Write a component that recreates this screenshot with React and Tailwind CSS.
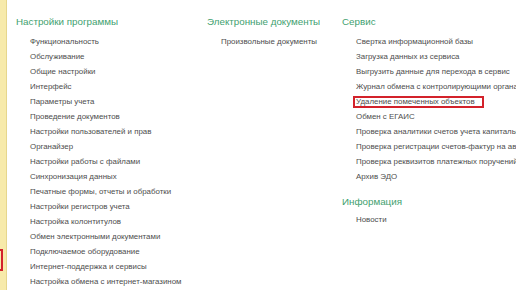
const settings = [
  'Функциональность',
  'Обслуживание',
  'Общие настройки',
  'Интерфейс',
  'Параметры учета',
  'Проведение документов',
  'Настройки пользователей и прав',
  'Органайзер',
  'Настройки работы с файлами',
  'Синхронизация данных',
  'Печатные формы, отчеты и обработки',
  'Настройки регистров учета',
  'Настройка колонтитулов',
  'Обмен электронными документами',
  'Подключаемое оборудование',
  'Интернет-поддержка и сервисы',
  'Настройка обмена с интернет-магазином',
]

const docs = ['Произвольные документы']

const service = [
  'Свертка информационной базы',
  'Загрузка данных из сервиса',
  'Выгрузить данные для перехода в сервис',
  'Журнал обмена с контролирующими органами',
  'Удаление помеченных объектов',
  'Обмен с ЕГАИС',
  'Проверка аналитики счетов учета капитальных вложений',
  'Проверка регистрации счетов-фактур на авансы',
  'Проверка реквизитов платежных поручений',
  'Архив ЭДО',
]

function Heading({ children }) {
  return <div className="h-[20px] text-[9.8px] leading-[20px] text-[#3f9f6f] whitespace-nowrap">{children}</div>
}

function Item({ children, marked }) {
  if (marked) {
    return (
      <div className="h-[15px] pl-[11px] flex items-center">
        <div className="w-[131px] h-[12px] border-2 border-[#d3222b] pl-[1px] text-[7.9px] leading-[8px] text-[#4d4d4d] whitespace-nowrap">
          {children}
        </div>
      </div>
    )
  }
  return (
    <div className="h-[15px] pl-[14px] text-[7.9px] leading-[15px] text-[#4d4d4d] whitespace-nowrap">
      {children}
    </div>
  )
}

function Section({ title, items, marked, gap = 'mt-[2px]' }) {
  return (
    <div>
      <Heading>{title}</Heading>
      <div className={gap}>
        {items.map((t) => (
          <Item key={t} marked={t === marked}>
            {t}
          </Item>
        ))}
      </div>
    </div>
  )
}

export default function App() {
  return (
    <div className="w-[516px] h-[290px] overflow-hidden bg-white flex" style={{ fontFamily: '"Liberation Sans", Arial, sans-serif' }}>
      <div className="relative w-[7px] shrink-0 bg-[#f7eaaa] border-r border-[#e6d68c]">
        <div className="absolute left-0 top-[249px] w-[3px] h-[22px] border-2 border-l-0 border-[#d3222b]" />
      </div>
      <div className="flex pt-[12px] pl-[9px]">
        <div className="w-[191px] shrink-0">
          <Section title="Настройки программы" items={settings} />
        </div>
        <div className="w-[136px] shrink-0">
          <Section title="Электронные документы" items={docs} />
        </div>
        <div className="w-[200px] shrink-0 -ml-[1px]">
          <Section title="Сервис" items={service} marked="Удаление помеченных объектов" />
          <div className="mt-[8px]">
            <Section title="Информация" items={['Новости']} gap="mt-0" />
          </div>
        </div>
      </div>
    </div>
  )
}
